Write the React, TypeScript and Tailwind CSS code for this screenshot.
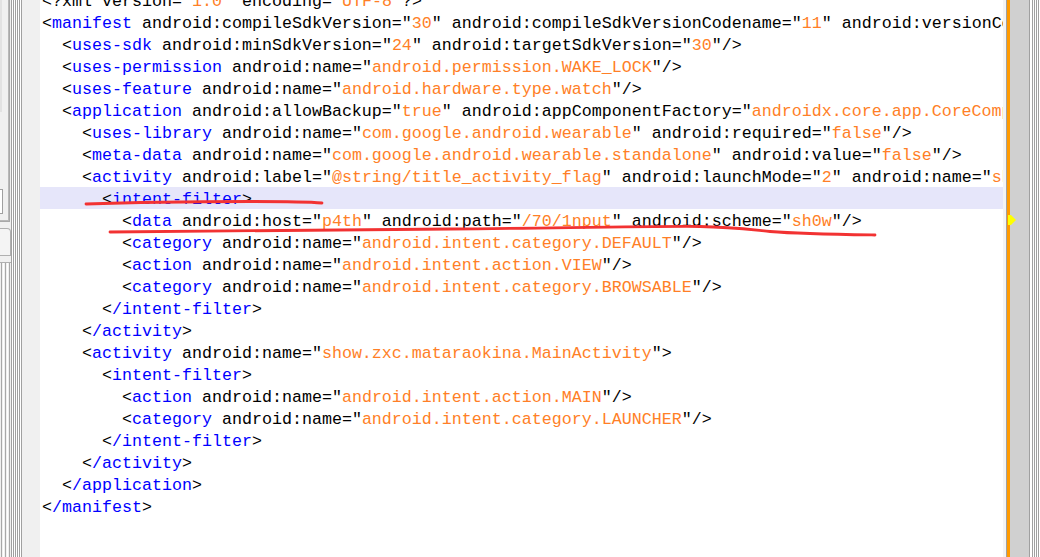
import type { ReactNode } from 'react';

const LINES = [
  '<?xml version="1.0" encoding="UTF-8"?>',
  '<manifest android:compileSdkVersion="30" android:compileSdkVersionCodename="11" android:versionCode="1" android:versionName="1.0" package="show.zxc.mataraokina">',
  '  <uses-sdk android:minSdkVersion="24" android:targetSdkVersion="30"/>',
  '  <uses-permission android:name="android.permission.WAKE_LOCK"/>',
  '  <uses-feature android:name="android.hardware.type.watch"/>',
  '  <application android:allowBackup="true" android:appComponentFactory="androidx.core.app.CoreComponentFactory" android:debuggable="true">',
  '    <uses-library android:name="com.google.android.wearable" android:required="false"/>',
  '    <meta-data android:name="com.google.android.wearable.standalone" android:value="false"/>',
  '    <activity android:label="@string/title_activity_flag" android:launchMode="2" android:name="show.zxc.mataraokina.FlagActivity">',
  '      <intent-filter>',
  '        <data android:host="p4th" android:path="/70/1nput" android:scheme="sh0w"/>',
  '        <category android:name="android.intent.category.DEFAULT"/>',
  '        <action android:name="android.intent.action.VIEW"/>',
  '        <category android:name="android.intent.category.BROWSABLE"/>',
  '      </intent-filter>',
  '    </activity>',
  '    <activity android:name="show.zxc.mataraokina.MainActivity">',
  '      <intent-filter>',
  '        <action android:name="android.intent.action.MAIN"/>',
  '        <category android:name="android.intent.category.LAUNCHER"/>',
  '      </intent-filter>',
  '    </activity>',
  '  </application>',
  '</manifest>',
];

// tag names blue, values orange, the rest black
function colorize(src: string) {
  const out: ReactNode[] = [];
  const re = /<\?xml|<\/([\w-]+)|<([\w-]+)|"([^"]*)"/g;
  let last = 0;
  let k = 0;
  let m: RegExpExecArray | null;
  while ((m = re.exec(src))) {
    if (m.index > last) out.push(src.slice(last, m.index));
    if (m[1]) {
      out.push('<');
      out.push(<span key={k++} className="text-[#0000ff]">/{m[1]}</span>);
    } else if (m[2]) {
      out.push('<');
      out.push(<span key={k++} className="text-[#0000ff]">{m[2]}</span>);
    } else if (m[3] !== undefined) {
      out.push('"');
      out.push(<span key={k++} className="text-[#ff7f27]">{m[3]}</span>);
      out.push('"');
    } else {
      out.push(m[0]);
    }
    last = re.lastIndex;
  }
  if (last < src.length) out.push(src.slice(last));
  return out;
}

function LeftDock() {
  return (
    <div className="flex w-[40px] shrink-0">
      <div className="flex w-[11px] flex-col bg-[#f0f0f0]">
        <div className="h-[222px] w-[10px] border-r border-b border-[#a8a8a8]">
          <div className="flex h-full w-[9px] flex-col border-r border-b border-[#b8b8b8]">
            <div className="h-[112px] w-[2px] bg-[#e2e2e2]" />
            <div className="mt-[77px] h-[25px] w-[3px] border border-l-0 border-[#a0a0a0] bg-white" />
          </div>
        </div>
        <div className="mt-[6px] h-[28px] w-[11px] rounded-tr-[4px] border border-l-0 border-[#b0b0b0] bg-[#f4f4f4]" />
        <div className="mt-[6px] flex flex-1 gap-[1px] border-t border-[#b0b0b0] pl-[1px]">
          <div className="w-[1px] bg-[#a8a8a8]" />
          <div className="w-[1px] bg-white" />
          <div className="w-[1px] bg-[#a8a8a8]" />
          <div className="w-[1px] bg-white" />
          <div className="w-[1px] bg-[#a8a8a8]" />
        </div>
      </div>
      <div className="flex w-[11px] gap-[1px] bg-white">
        <div className="w-[1px] bg-[#a0a0a0]" />
        <div className="w-[1px] bg-[#a0a0a0]" />
        <div className="w-[1px] bg-[#a0a0a0]" />
        <div className="w-[1px] bg-[#a0a0a0]" />
        <div className="w-[1px] bg-[#a0a0a0]" />
        <div className="w-[1px] bg-[#a0a0a0]" />
      </div>
      <div className="w-[18px] bg-[#f0f0f0]" />
    </div>
  );
}

function RightDock() {
  return (
    <div className="flex shrink-0">
      <div className="w-[3px] bg-[#f4f4f4]" />
      <div className="w-[1px] bg-[#a0a0a0]" />
      <div className="w-[3px] bg-[#ff9a00]" />
      <div className="w-[19px] bg-[#d0d0d0]" />
      <div className="flex w-[11px] bg-white">
        <div className="w-[1px] bg-[#a0a0a0]" />
        <div className="ml-[2px] w-[1px] bg-[#a0a0a0]" />
        <div className="ml-[1px] w-[1px] bg-[#a0a0a0]" />
        <div className="ml-[1px] w-[1px] bg-[#a0a0a0]" />
        <div className="ml-[1px] w-[1px] bg-[#a0a0a0]" />
      </div>
    </div>
  );
}

export default function App() {
  return (
    <div className="relative flex h-[557px] w-[1040px] overflow-hidden bg-white">
      <LeftDock />
      <div className="w-[963px] shrink-0 overflow-hidden bg-white">
        <div className="mt-[-11px] font-['Liberation_Mono',monospace] text-[16.67px] leading-[22px] text-black">
          {LINES.map((line, i) => (
            <div
              key={i}
              className={`h-[22px] whitespace-pre pl-[2px] pt-[2px] ${i === 9 ? 'bg-[#e6e6fa]' : ''}`}
            >
              {colorize(line)}
            </div>
          ))}
        </div>
      </div>
      <RightDock />

      <svg
        className="pointer-events-none absolute inset-0"
        width="1040"
        height="557"
        viewBox="0 0 1040 557"
        fill="none"
      >
        <path
          d="M86 204 C140 202 200 201.5 250 201.5 C290 201.5 310 202 322 203"
          stroke="#f23232"
          strokeWidth="2.8"
          strokeLinecap="round"
        />
        <path
          d="M110 232 C230 231 350 230 450 229 C560 228 650 226 700 226.5 C730 227 745 229 770 231.5 C800 234 840 234.5 875 235"
          stroke="#f23232"
          strokeWidth="2.8"
          strokeLinecap="round"
        />
        <polygon points="1008,215 1011,215 1016,220 1011,225 1008,225" fill="#ffff00" />
      </svg>
    </div>
  );
}
